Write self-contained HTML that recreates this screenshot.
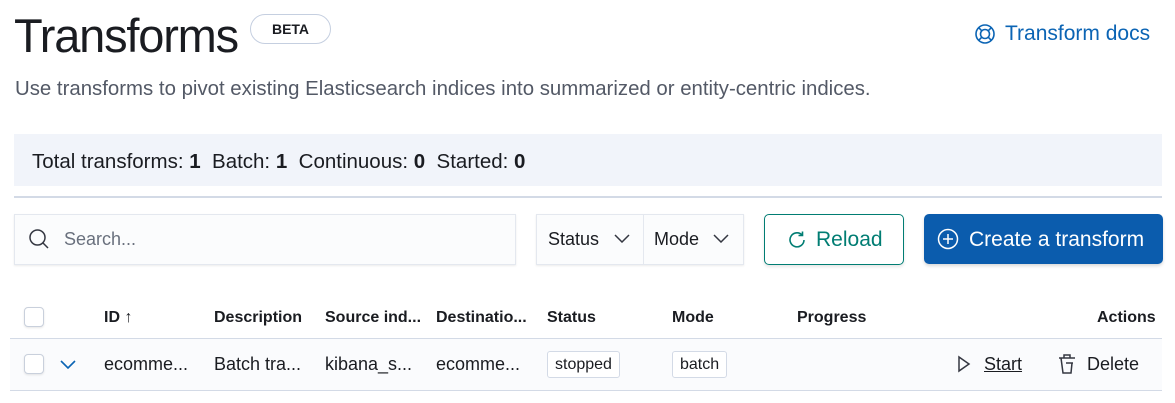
<!DOCTYPE html>
<html><head><style>
body{margin:0;width:1175px;height:403px;background:#fff;font-family:"Liberation Sans",sans-serif;color:#1a1c21;position:relative;overflow:hidden}
.a{position:absolute;white-space:nowrap}
.cb{position:absolute;width:18px;height:18px;border:1px solid #c9d0dc;border-radius:4px;background:#fff;box-shadow:0 1px 2px rgba(0,0,0,.1)}
.th{font-weight:bold;font-size:16px;top:309px}
.td{font-size:18px;top:354px}
.bd{position:absolute;border:1px solid #d3dae6;border-radius:3px;background:#fff;font-size:16px;height:25px;line-height:25px;padding:0 7px;top:351px}
</style></head><body>
<div class="a" style="left:14px;top:8px;font-size:47px;color:#1a1c21;letter-spacing:-1.2px">Transforms</div>
<div class="a" style="left:250px;top:14px;width:79px;height:28px;border:1px solid #c5cfe0;border-radius:15px;font-size:14px;font-weight:bold;text-align:center;line-height:28px">BETA</div>
<svg class="a" style="left:974px;top:23px" width="22" height="22" viewBox="0 0 22 22" fill="none" stroke="#0b64b4" stroke-width="1.6"><circle cx="11" cy="11" r="9"/><circle cx="11" cy="11" r="4.5"/><path d="M4.6 4.6l3.2 3.2M17.4 4.6l-3.2 3.2M4.6 17.4l3.2-3.2M17.4 17.4l-3.2-3.2"/></svg>
<div class="a" style="left:1005px;top:22px;font-size:21px;color:#0b64b4">Transform docs</div>
<div class="a" style="left:15px;top:78px;font-size:20.4px;color:#535966">Use transforms to pivot existing Elasticsearch indices into summarized or entity-centric indices.</div>
<div class="a" style="left:14px;top:134px;width:1148px;height:52px;background:#f1f4fa"></div>
<div class="a" style="left:14px;top:196px;width:1148px;height:2px;background:#d3dae6"></div>
<div class="a" style="left:32px;top:150px;font-size:20.5px">Total transforms: <b>1</b>&nbsp; Batch: <b>1</b>&nbsp; Continuous: <b>0</b>&nbsp; Started: <b>0</b></div>
<div class="a" style="left:14px;top:214px;width:500px;height:49px;background:#fbfcfd;border:1px solid #e4e8ef;box-shadow:0 1px 2px rgba(0,0,0,.08)"></div>
<svg class="a" style="left:28px;top:228px" width="22" height="22" viewBox="0 0 22 22" fill="none" stroke="#343741" stroke-width="1.5"><circle cx="9.5" cy="9.5" r="7.5"/><path d="M15 15l5 5"/></svg>
<div class="a" style="left:64px;top:229px;font-size:18px;color:#69707d">Search...</div>
<div class="a" style="left:536px;top:214px;width:206px;height:49px;background:#fbfcfd;border:1px solid #e4e8ef;box-shadow:0 1px 2px rgba(0,0,0,.08)"></div>
<div class="a" style="left:643px;top:215px;width:1px;height:49px;background:#e4e8ef"></div>
<div class="a" style="left:548px;top:229px;font-size:18px">Status</div>
<div class="a" style="left:654px;top:229px;font-size:18px">Mode</div>
<svg class="a" style="left:614px;top:233px" width="16" height="10" fill="none" stroke="#343741" stroke-width="1.5"><path d="M1 2l7 7 7-7"/></svg>
<svg class="a" style="left:713px;top:233px" width="16" height="10" fill="none" stroke="#343741" stroke-width="1.5"><path d="M1 2l7 7 7-7"/></svg>
<div class="a" style="left:764px;top:214px;width:138px;height:49px;border:1px solid #017d73;border-radius:5px;box-shadow:0 2px 3px rgba(0,0,0,.1)"></div>
<svg class="a" style="left:788px;top:230px" width="18" height="18" fill="none" stroke="#017d73" stroke-width="1.6"><path d="M14.5 5.5A7 7 0 1 0 16 10"/><path d="M14.5 1.5v4h-4"/></svg>
<div class="a" style="left:816px;top:228px;font-size:21px;color:#017d73">Reload</div>
<div class="a" style="left:924px;top:214px;width:239px;height:50px;background:#0b5cad;border-radius:5px;box-shadow:0 2px 3px rgba(0,0,0,.15)"></div>
<svg class="a" style="left:937px;top:228px" width="22" height="22" fill="none" stroke="#fff" stroke-width="1.5"><circle cx="11" cy="11" r="9.5"/><path d="M11 6v10M6 11h10"/></svg>
<div class="a" style="left:969px;top:228px;font-size:21px;color:#fff">Create a transform</div>
<div class="cb" style="left:24px;top:307px"></div>
<div class="a th" style="left:104px">ID <span style="font-weight:normal">&#8593;</span></div>
<div class="a th" style="left:214px">Description</div>
<div class="a th" style="left:325px">Source ind...</div>
<div class="a th" style="left:436px">Destinatio...</div>
<div class="a th" style="left:547px">Status</div>
<div class="a th" style="left:672px">Mode</div>
<div class="a th" style="left:797px">Progress</div>
<div class="a th" style="left:1097px">Actions</div>
<div class="a" style="left:10px;top:338px;width:1152px;height:51px;background:#fafbfd;border-top:1px solid #d3dae6;border-bottom:1px solid #d3dae6"></div>
<div class="cb" style="left:24px;top:354px"></div>
<svg class="a" style="left:60px;top:359px" width="16" height="10" fill="none" stroke="#0b64b4" stroke-width="1.6"><path d="M1 2l7 7 7-7"/></svg>
<div class="a td" style="left:104px">ecomme...</div>
<div class="a td" style="left:214px">Batch tra...</div>
<div class="a td" style="left:325px">kibana_s...</div>
<div class="a td" style="left:436px">ecomme...</div>
<div class="bd" style="left:547px">stopped</div>
<div class="bd" style="left:672px">batch</div>
<svg class="a" style="left:957px;top:355px" width="14" height="18" fill="none" stroke="#343741" stroke-width="1.5"><path d="M2 2l10 7-10 7z"/></svg>
<div class="a td" style="left:984px;text-decoration:underline">Start</div>
<svg class="a" style="left:1057px;top:353px" width="20" height="22" fill="none" stroke="#343741" stroke-width="1.5"><path d="M2 5h16M7 5V2h6v3M4 5l2 15h8l1-10M9 10h7"/></svg>
<div class="a td" style="left:1087px">Delete</div>
</body></html>
